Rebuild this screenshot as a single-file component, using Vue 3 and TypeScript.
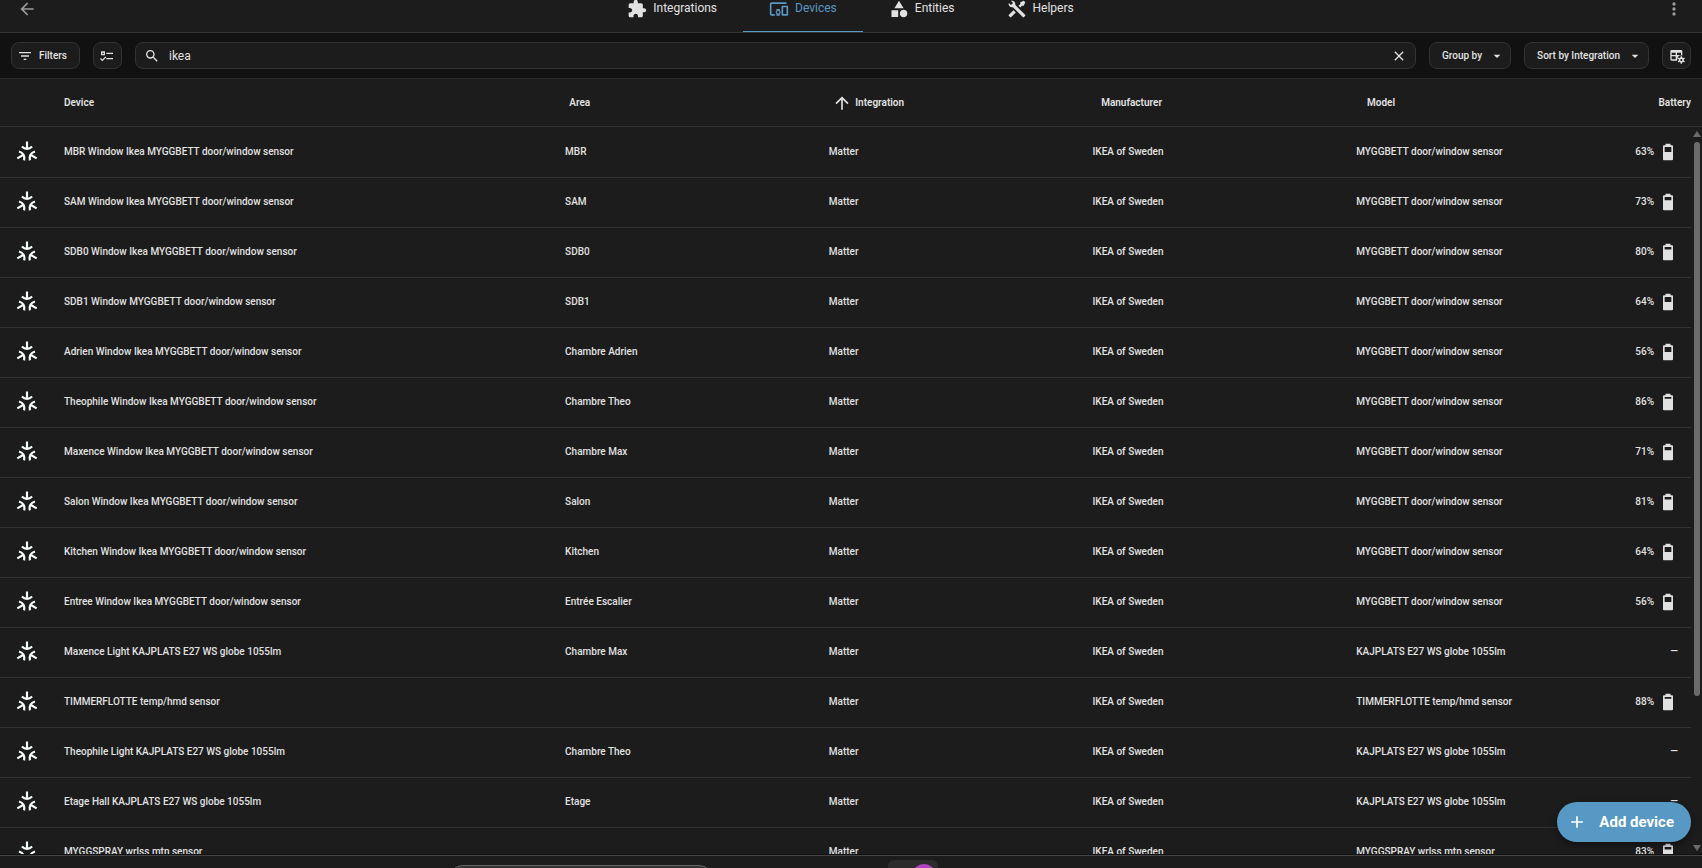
<script setup lang="ts">
interface Device {
  name: string
  area: string
  maker: string
  model: string
  battery: number | null
}

const sensor = 'MYGGBETT door/window sensor'
const globe = 'KAJPLATS E27 WS globe 1055lm'
const row = (name: string, area: string, model: string, battery: number | null): Device =>
  ({ name, area, maker: 'IKEA of Sweden', model, battery })

const devices: Device[] = [
  row('MBR Window Ikea MYGGBETT door/window sensor', 'MBR', sensor, 63),
  row('SAM Window Ikea MYGGBETT door/window sensor', 'SAM', sensor, 73),
  row('SDB0 Window Ikea MYGGBETT door/window sensor', 'SDB0', sensor, 80),
  row('SDB1 Window MYGGBETT door/window sensor', 'SDB1', sensor, 64),
  row('Adrien Window Ikea MYGGBETT door/window sensor', 'Chambre Adrien', sensor, 56),
  row('Theophile Window Ikea MYGGBETT door/window sensor', 'Chambre Theo', sensor, 86),
  row('Maxence Window Ikea MYGGBETT door/window sensor', 'Chambre Max', sensor, 71),
  row('Salon Window Ikea MYGGBETT door/window sensor', 'Salon', sensor, 81),
  row('Kitchen Window Ikea MYGGBETT door/window sensor', 'Kitchen', sensor, 64),
  row('Entree Window Ikea MYGGBETT door/window sensor', 'Entrée Escalier', sensor, 56),
  row('Maxence Light KAJPLATS E27 WS globe 1055lm', 'Chambre Max', globe, null),
  row('TIMMERFLOTTE temp/hmd sensor', '', 'TIMMERFLOTTE temp/hmd sensor', 88),
  row('Theophile Light KAJPLATS E27 WS globe 1055lm', 'Chambre Theo', globe, null),
  row('Etage Hall KAJPLATS E27 WS globe 1055lm', 'Etage', globe, null),
  row('MYGGSPRAY wrlss mtn sensor', '', 'MYGGSPRAY wrlss mtn sensor', 83),
]

const tabs = [
  { label: 'Integrations', icon: 'M20.5,11H19V7C19,5.89 18.1,5 17,5H13V3.5A2.5,2.5 0 0,0 10.5,1A2.5,2.5 0 0,0 8,3.5V5H4A2,2 0 0,0 2,7V10.8H3.5C5,10.8 6.2,12 6.2,13.5C6.2,15 5,16.2 3.5,16.2H2V20A2,2 0 0,0 4,22H7.8V20.5C7.8,19 9,17.8 10.5,17.8C12,17.8 13.2,19 13.2,20.5V22H17A2,2 0 0,0 19,20V16H20.5A2.5,2.5 0 0,0 23,13.5A2.5,2.5 0 0,0 20.5,11Z' },
  { label: 'Devices', icon: 'M3 6H21V4H3C1.9 4 1 4.9 1 6V18C1 19.1 1.9 20 3 20H7V18H3V6M13 12H9V13.78C8.39 14.33 8 15.11 8 16C8 16.89 8.39 17.67 9 18.22V20H13V18.22C13.61 17.67 14 16.88 14 16S13.61 14.33 13 13.78V12M11 17.5C10.17 17.5 9.5 16.83 9.5 16S10.17 14.5 11 14.5 12.5 15.17 12.5 16 11.83 17.5 11 17.5M22 8H16C15.5 8 15 8.5 15 9V19C15 19.5 15.5 20 16 20H22C22.5 20 23 19.5 23 19V9C23 8.5 22.5 8 22 8M21 18H17V10H21V18Z' },
  { label: 'Entities', icon: 'M11,13.5V21.5H3V13.5H11M12,2L17.5,11H6.5L12,2M17.5,13C20,13 22,15 22,17.5C22,20 20,22 17.5,22C15,22 13,20 13,17.5C13,15 15,13 17.5,13Z' },
  { label: 'Helpers', icon: 'M21.71 20.29L20.29 21.71A1 1 0 0 1 18.88 21.71L7 9.85A3.81 3.81 0 0 1 6 10A4 4 0 0 1 2.22 4.7L4.76 7.24L5.29 6.71L6.71 5.29L7.24 4.76L4.7 2.22A4 4 0 0 1 10 6A3.81 3.81 0 0 1 9.85 7L21.71 18.88A1 1 0 0 1 21.71 20.29M2.29 18.88A1 1 0 0 0 2.29 20.29L3.71 21.71A1 1 0 0 0 5.12 21.71L10.59 16.25L7.76 13.42M20 2L16 4V6L13.83 8.17L15.83 10.17L18 8H20L22 4Z' },
]

// Top edge of the charge inside the 24-unit battery outline, by tenths of charge.
const levels: Record<number, number> = { 6: 12, 7: 10, 8: 9, 9: 8 }
const level = (value: number): number => levels[Math.round(value / 10)] ?? 19
</script>

<template>
  <div class="page">
    <header class="topbar">
      <button class="plain" aria-label="Back">
        <svg class="i20" viewBox="0 0 24 24"><path d="M20,11V13H8L13.5,18.5L12.08,19.92L4.16,12L12.08,4.08L13.5,5.5L8,11H20Z" /></svg>
      </button>
      <nav class="tabs">
        <a v-for="tab in tabs" :key="tab.label" href="#" class="tab" :class="{ active: tab.label === 'Devices' }">
          <svg class="i20" viewBox="0 0 24 24"><path :d="tab.icon" /></svg>
          <span>{{ tab.label }}</span>
        </a>
      </nav>
      <button class="plain" aria-label="More options">
        <svg class="i20" viewBox="0 0 24 24"><path d="M12,16A2,2 0 0,1 14,18A2,2 0 0,1 12,20A2,2 0 0,1 10,18A2,2 0 0,1 12,16M12,10A2,2 0 0,1 14,12A2,2 0 0,1 12,14A2,2 0 0,1 10,12A2,2 0 0,1 12,10M12,4A2,2 0 0,1 14,6A2,2 0 0,1 12,8A2,2 0 0,1 10,6A2,2 0 0,1 12,4Z" /></svg>
      </button>
    </header>

    <div class="toolbar">
      <button class="chip filters">
        <svg class="i16" viewBox="0 0 24 24"><path d="M6,13H18V11H6M3,6V8H21V6M10,18H14V16H10V18Z" /></svg>
        <span>Filters</span>
      </button>
      <button class="chip square" aria-label="Select devices">
        <svg class="i16" viewBox="0 0 24 24"><path d="M3,5H9V11H3V5M5,7V9H7V7H5M11,7H21V9H11V7M11,15H21V17H11V15M5,20L1.5,16.5L2.91,15.09L5,17.17L9.59,12.59L11,14L5,20Z" /></svg>
      </button>
      <div class="chip search">
        <svg class="i16" viewBox="0 0 24 24"><path d="M9.5,3A6.5,6.5 0 0,1 16,9.5C16,11.11 15.41,12.59 14.44,13.73L14.71,14H15.5L20.5,19L19,20.5L14,15.5V14.71L13.73,14.44C12.59,15.41 11.11,16 9.5,16A6.5,6.5 0 0,1 3,9.5A6.5,6.5 0 0,1 9.5,3M9.5,5C7,5 5,7 5,9.5C5,12 7,14 9.5,14C12,14 14,12 14,9.5C14,7 12,5 9.5,5Z" /></svg>
        <input type="text" value="ikea" aria-label="Search devices" />
        <button class="plain" aria-label="Clear search">
          <svg class="i16" viewBox="0 0 24 24"><path d="M19,6.41L17.59,5L12,10.59L6.41,5L5,6.41L10.59,12L5,17.59L6.41,19L12,13.41L17.59,19L19,17.59L13.41,12L19,6.41Z" /></svg>
        </button>
      </div>
      <button class="chip menu">
        <span>Group by</span>
        <svg class="i16" viewBox="0 0 24 24"><path d="M7,10L12,15L17,10H7Z" /></svg>
      </button>
      <button class="chip menu">
        <span>Sort by Integration</span>
        <svg class="i16" viewBox="0 0 24 24"><path d="M7,10L12,15L17,10H7Z" /></svg>
      </button>
      <button class="chip square" aria-label="Customize table">
        <svg class="i16" viewBox="0 0 24 24"><path fill-rule="evenodd" d="M4,3H18A2,2 0 0,1 20,5V11.3A6,6 0 0,0 12.8,14.5V17H12.1V19H4A2,2 0 0,1 2,17V5A2,2 0 0,1 4,3M4,7V10.5H10V7H4M12,7V10.5H18V7H12M4,12.5V17H10V12.5H4Z" /><path fill="none" stroke="currentColor" stroke-width="2.4" d="M18.5,15.2A2.8,2.8 0 1,1 18.4,15.2Z" /><path fill="none" stroke="currentColor" stroke-width="2" d="M18.5,12.5V15M18.5,21V23.5M13.7,15.2L15.9,16.5M21.1,19.5L23.3,20.8M13.7,20.8L15.9,19.5M21.1,16.5L23.3,15.2" /></svg>
      </button>
    </div>

    <div class="content">
      <table>
        <thead>
          <tr>
            <td></td>
            <th>Device</th>
            <th>Area</th>
            <th class="sorted">
              <svg class="i20" viewBox="0 0 24 24"><path d="M13,20H11V8L5.5,13.5L4.08,12.08L12,4.16L19.92,12.08L18.5,13.5L13,8V20Z" /></svg>
              Integration
            </th>
            <th>Manufacturer</th>
            <th>Model</th>
            <th class="power">Battery</th>
          </tr>
        </thead>
        <tbody>
          <tr v-for="device in devices" :key="device.name">
            <td class="logo">
              <svg viewBox="0 0 20 20">
                <g v-for="turn in [0, 120, 240]" :key="turn" :transform="`rotate(${turn} 10 11.8)`">
                  <path d="M10 0.6V7.8M4.9 5.5Q7.2 7.8 10 7.8T15.1 5.5" />
                </g>
              </svg>
            </td>
            <td>{{ device.name }}</td>
            <td>{{ device.area }}</td>
            <td>Matter</td>
            <td>{{ device.maker }}</td>
            <td>{{ device.model }}</td>
            <td class="power">
              <template v-if="device.battery !== null">
                <span>{{ device.battery }}%</span>
                <svg class="i20" viewBox="0 0 24 24">
                  <path fill-rule="evenodd" :d="`M16.67,4H15V2H9V4H7.33A1.33,1.33 0 0,0 6,5.33V20.67C6,21.4 6.6,22 7.33,22H16.67A1.33,1.33 0 0,0 18,20.67V5.33C18,4.6 17.4,4 16.67,4M8,6H16V${level(device.battery)}H8Z`" />
                </svg>
              </template>
              <span v-else>—</span>
            </td>
          </tr>
        </tbody>
      </table>

      <div class="scrollbar" aria-hidden="true">
        <i class="up"></i>
        <i class="thumb"></i>
        <i class="down"></i>
      </div>
      <button class="fab">
        <svg class="i20" viewBox="0 0 24 24"><path d="M19,13H13V19H11V13H5V11H11V5H13V11H19V13Z" /></svg>
        <span>Add device</span>
      </button>
    </div>

    <footer class="dock">
      <div class="dock-search"></div>
      <div class="dock-app"><i></i></div>
    </footer>
  </div>
</template>

<style>
body {
  margin: 0;
  background: #1c1c1c;
}
</style>

<style scoped>
.page {
  display: flex;
  flex-direction: column;
  height: 100vh;
  overflow: hidden;
  background: #1c1c1c;
  color: #e1e1e1;
  font: 500 10px/16px Roboto, sans-serif;
}

svg {
  flex: none;
  display: block;
  fill: currentColor;
}

.i20 {
  width: 20px;
  height: 20px;
}

.i16 {
  width: 16px;
  height: 16px;
}

button {
  font: inherit;
  color: inherit;
  cursor: pointer;
}

.plain {
  padding: 0;
  border: 0;
  background: none;
}

.topbar {
  flex: none;
  display: flex;
  justify-content: space-between;
  height: 32px;
  padding: 0 18px 0 17px;
  border-bottom: 1px solid #333;
}

.topbar > .plain {
  height: 18px;
  color: #9b9b9b;
}

.topbar > .plain svg {
  margin-top: -1px;
}

.tabs {
  display: flex;
}

.tab {
  display: flex;
  gap: 6px;
  height: 31px;
  padding: 0 26px;
  border-bottom: 1px solid transparent;
  color: #e1e1e1;
  font-size: 12px;
  font-weight: 400;
  text-decoration: none;
}

.tab svg {
  margin-top: -1px;
}

.tab.active {
  border-color: #5898c4;
  color: #5898c4;
}

.toolbar {
  flex: none;
  display: flex;
  gap: 13px;
  padding: 9px 11px;
  border-bottom: 1px solid #2c2c2c;
  background: #111;
}

.chip {
  box-sizing: border-box;
  display: flex;
  align-items: center;
  height: 27px;
  padding: 0 5px;
  border: 1px solid #333;
  border-radius: 8px;
  background: #1c1c1c;
  white-space: nowrap;
}

.filters {
  gap: 6px;
  padding-right: 12px;
}

.square {
  justify-content: center;
  width: 29px;
}

.search {
  flex: 1;
  gap: 9px;
  padding: 0 8px;
}

.search input {
  flex: 1;
  min-width: 0;
  padding: 0;
  border: 0;
  outline: 0;
  background: none;
  color: inherit;
  font: 400 12px/16px Roboto, sans-serif;
}

.menu {
  gap: 7px;
  padding-left: 12px;
}

.content {
  flex: 1;
  position: relative;
  min-height: 0;
}

table {
  display: flex;
  flex-direction: column;
  height: 100%;
}

thead {
  flex: none;
  border-bottom: 1px solid #333;
}

thead,
tbody {
  display: block;
}

tbody {
  flex: 1;
  min-height: 0;
  margin-right: 11px;
  padding-top: 1px;
  overflow: hidden;
}

tr {
  display: grid;
  grid-template-columns: 53px 19fr 10fr 10fr 10fr 10fr 80px;
  align-items: center;
}

thead tr {
  height: 47px;
}

tbody tr {
  grid-template-columns: 53px 19fr 10fr 10fr 10fr 10fr 82px;
  height: 49px;
  border-bottom: 1px solid #333;
}

th,
td {
  padding: 0 0 0 11px;
  font-weight: 500;
  text-align: left;
  white-space: nowrap;
}

td {
  padding-bottom: 2px;
}

th {
  font-weight: 600;
}

.sorted {
  display: flex;
  align-items: center;
  gap: 3px;
  padding-left: 8px;
}

th.power {
  padding-right: 11px;
  text-align: right;
}

td.power {
  display: flex;
  align-items: center;
  justify-content: flex-end;
  gap: 4px;
  padding-right: 13px;
}

.logo {
  padding-left: 17px;
}

.logo svg {
  width: 20px;
  height: 20px;
  margin-bottom: 2px;
  overflow: visible;
  fill: none;
  stroke: #f4fbf8;
  stroke-width: 2.2;
}

.scrollbar {
  position: absolute;
  top: 48px;
  right: 0;
  bottom: 0;
  display: flex;
  flex-direction: column;
  align-items: center;
  width: 11px;
  padding: 4px 0;
  box-sizing: border-box;
}

.up,
.down {
  border: 4px solid transparent;
}

.up {
  border-top: 0;
  border-bottom: 6px solid #6b6b6b;
}

.down {
  margin-top: auto;
  border-bottom: 0;
  border-top: 6px solid #6b6b6b;
}

.thumb {
  width: 6px;
  height: 77%;
  margin-top: 5px;
  border-radius: 3px;
  background: #6b6b6b;
}

.fab {
  position: absolute;
  right: 11px;
  bottom: 13px;
  display: flex;
  align-items: center;
  gap: 12px;
  height: 40px;
  padding: 0 17px 0 10px;
  border: 0;
  border-radius: 20px;
  background: #5898c4;
  box-shadow: 0 3px 6px rgb(0 0 0 / 40%);
  color: #fff;
  font-size: 15px;
  font-weight: 700;
}

.dock {
  flex: none;
  position: relative;
  display: flex;
  justify-content: center;
  height: 12px;
  border-top: 1px solid #444;
  box-shadow: 0 -1px #111;
  overflow: hidden;
}

.dock-search {
  width: 264px;
  height: 30px;
  margin: 9px 174px 0 0;
  border: 1px solid #666;
  border-radius: 15px;
  background: #333;
}

.dock-app {
  width: 50px;
  height: 40px;
  margin: 4px 316px 0 0;
  border-radius: 6px;
  background: #2b2b2b;
}

.dock-app i {
  display: block;
  width: 24px;
  height: 24px;
  margin: 4px 0 0 24px;
  border-radius: 50%;
  background: #b044c0;
}
</style>
